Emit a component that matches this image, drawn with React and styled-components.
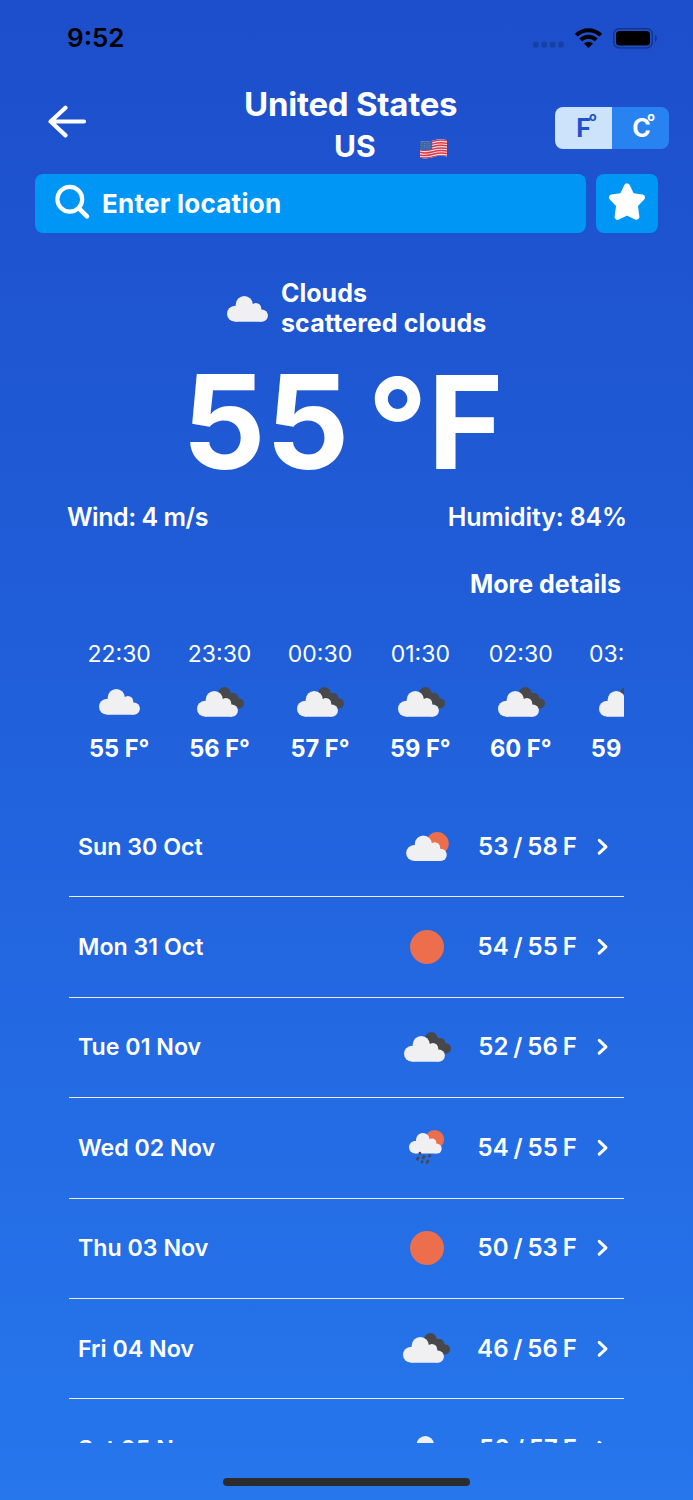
import React from "react";
import styled, { createGlobalStyle } from "styled-components";

const GlobalStyle = createGlobalStyle`
    * {
        box-sizing: border-box;
    }
    body {
        margin: 0;
        background: #2676ec;
    }
`;

const Screen = styled.div`
    display: flex;
    flex-direction: column;
    width: 693px;
    height: 1500px;
    overflow: hidden;
    background: linear-gradient(180deg, #1d4ecb 0%, #1f58d3 27%, #2161dc 50%, #2676ec 100%);
    color: #fff;
    font-family: Inter, "Liberation Sans", sans-serif;
`;

/* Every text is one line box, varied by size, weight and tracking */
const Text = styled.span`
    display: block;
    white-space: pre;
    font-size: ${(p) => p.$size}px;
    font-weight: ${(p) => p.$weight || 650};
    line-height: ${(p) => p.$line || 30}px;
    letter-spacing: ${(p) => p.$track || 0}px;
`;

const StatusBar = styled.div`
    display: flex;
    justify-content: space-between;
    align-items: center;
    height: 76px;
    flex-shrink: 0;
    padding: 0 36px 0 67px;
    color: #000;
`;

const StatusIcons = styled.div`
    display: flex;
    align-items: center;
`;

const WifiWrap = styled.div`
    display: flex;
    margin: 0 11px;
`;

const Header = styled.header`
    display: flex;
    height: 98px;
    flex-shrink: 0;
    padding: 0 24px 0 48px;
`;

const BackButton = styled.button`
    display: flex;
    width: 196px;
    padding: 29px 0 0;
    border: 0;
    background: none;
`;

const Place = styled.div`
    flex: 1;
    padding-top: 8px;
`;

const CountryRow = styled.div`
    display: flex;
    align-items: center;
    gap: 44px;
    padding: 1px 0 0 90px;
`;

const FlagWrap = styled.div`
    display: flex;
    padding-top: 4px;
`;

const UnitSwitch = styled.div`
    display: flex;
    width: 114px;
    height: 42px;
    margin-top: 31px;
    border-radius: 8px;
    overflow: hidden;
`;

const Unit = styled.button`
    display: flex;
    justify-content: center;
    flex: 1;
    padding: 6px 0 0 6px;
    border: 0;
    font-family: inherit;
    background: ${(p) => (p.$active ? "#cde3fb" : "#2883f1")};
    color: ${(p) => (p.$active ? "#1f50cc" : "#fff")};
`;

const UnitDegree = styled(Text)`
    margin-left: ${(p) => p.$shift}px;
`;

const SearchRow = styled.div`
    display: flex;
    gap: 10px;
    height: 59px;
    flex-shrink: 0;
    padding: 0 35px;
`;

const SearchBox = styled.div`
    display: flex;
    align-items: center;
    gap: 11px;
    flex: 1;
    padding-left: 20px;
    border-radius: 8px;
    background: #0096f6;
`;

const SearchIconWrap = styled.div`
    display: flex;
    margin-bottom: 4px;
`;

const FavoriteButton = styled.button`
    display: flex;
    justify-content: center;
    width: 62px;
    padding: 9px 0 0;
    border: 0;
    border-radius: 8px;
    background: #0096f6;
`;

const Condition = styled.div`
    display: flex;
    align-items: center;
    gap: 13px;
    height: 60px;
    flex-shrink: 0;
    margin-top: 45px;
    padding-left: 227px;

    svg {
        margin-top: 2px;
    }
`;

const Temperature = styled.div`
    display: flex;
    height: 120px;
    flex-shrink: 0;
    margin-top: 24px;
    padding-left: 182px;
`;

const Degree = styled(Text)`
    margin: 3px 0 0 18px;
`;

const Stats = styled.div`
    display: flex;
    justify-content: space-between;
    margin-top: 20px;
    padding: 0 66px 0 67px;
`;

const MoreLink = styled.div`
    display: flex;
    justify-content: flex-end;
    margin-top: 37px;
    padding-right: 72px;
`;

const Hourly = styled.div`
    display: flex;
    flex-shrink: 0;
    height: 158px;
    margin: 40px 69px 0;
    overflow: hidden;
`;

const Hour = styled.div`
    display: flex;
    flex-direction: column;
    align-items: center;
    flex: 0 0 100.4px;
`;

const HourIcon = styled.div`
    display: flex;
    justify-content: center;
    align-items: center;
    height: 65px;
    padding: 1px 0 0 ${(p) => (p.$wide ? 2 : 0)}px;
`;

const Daily = styled.div`
    height: 646px;
    flex-shrink: 0;
    margin: 0 69px;
    overflow: hidden;
`;

const Day = styled.div`
    display: flex;
    align-items: center;
    height: 100.4px;
    padding: 0 15px 0 9px;
    border-bottom: 1px solid #e9f0fc;
`;

const DayIcon = styled.div`
    display: flex;
    justify-content: center;
    width: 50px;
    margin: 0 25.5px 1px auto;
`;

const DayTemp = styled(Text)`
    margin-right: 20px;
    word-spacing: -1.5px;
`;

const HomeBar = styled.div`
    width: 247px;
    height: 8px;
    flex-shrink: 0;
    margin: 35px 0 0 223px;
    border-radius: 4px;
    background: #2c2c2e;
`;

const CloudShape = () => (
    <g fill="#f0f0f2">
        <circle cx="17.3" cy="8.6" r="8.6" />
        <circle cx="7.8" cy="17.8" r="7.8" />
        <circle cx="28.9" cy="12.2" r="5.3" />
        <circle cx="34.8" cy="19.6" r="6.1" />
        <path d="M6 10.4 L9 9.6 L24.6 7.8 L33 10.6 L34.4 13.8 L34.8 25.7 H7.8 Z" />
    </g>
);

const CloudIcon = () => (
    <svg width="41" height="26" viewBox="0 0 41 26">
        <CloudShape />
    </svg>
);

const BrokenCloudsIcon = () => (
    <svg width="47" height="30" viewBox="0 -4 47 30">
        <g fill="#48484a">
            <circle cx="27.3" cy="2.3" r="6.2" />
            <circle cx="36.4" cy="6.8" r="4.8" />
            <circle cx="42" cy="12.4" r="5" />
            <path d="M22 4 L31 -2 L34 2 L40 4.4 L42 8 L41 17.4 L34 16 Z" />
        </g>
        <CloudShape />
    </svg>
);

const SunCloudIcon = () => (
    <svg width="43" height="29" viewBox="0 -3.4 43 29.2">
        <circle cx="31.4" cy="8.2" r="11.5" fill="#ec6e4c" />
        <CloudShape />
    </svg>
);

const SunIcon = () => (
    <svg width="34" height="34" viewBox="0 0 34 34">
        <circle cx="17" cy="17" r="17" fill="#ec6e4c" />
    </svg>
);

const RainIcon = () => (
    <svg width="36" height="34" viewBox="0 0 36 34">
        <circle cx="25.7" cy="9.4" r="9.4" fill="#ec6e4c" />
        <g transform="translate(0 3) scale(0.8)">
            <CloudShape />
        </g>
        <g stroke="#48484a" strokeWidth="2.6" strokeLinecap="round">
            <path d="M10.9 23v.4M9.1 27.8l-.8 1.6M15.1 26.4l-.8 1.6M20.9 25.4l-.4.9M13.2 31.6l-.3.6M18.9 31l-.8 1.5" />
        </g>
    </svg>
);

const icons = {
    cloud: <CloudIcon />,
    broken: <BrokenCloudsIcon />,
    sunCloud: <SunCloudIcon />,
    sun: <SunIcon />,
    rain: <RainIcon />,
};

const SignalDots = () => (
    <svg width="31" height="20" viewBox="0 0 31 20">
        {[0, 8.4, 16.8, 25.2].map((x) => (
            <rect key={x} x={x} y="13.8" width="5.6" height="5.8" rx="1.8" fill="#173fa4" />
        ))}
    </svg>
);

const WifiIcon = () => (
    <svg width="27" height="20" viewBox="0 0 27 20">
        <g fill="none" stroke="#000" strokeWidth="4">
            <path d="M1.3 7.2 A17.3 17.3 0 0 1 25.7 7.2" />
            <path d="M5.7 11.9 A11 11 0 0 1 21.3 11.9" />
        </g>
        <path d="M13.5 20 L9 15.6 A6.4 6.4 0 0 1 18 15.6 Z" />
    </svg>
);

const BatteryIcon = () => (
    <svg width="44" height="21" viewBox="0 0 44 21">
        <rect x="0.7" y="0.7" width="38.6" height="19.2" rx="5.6" fill="none" stroke="#153585" strokeWidth="1.4" />
        <rect x="3" y="3" width="34" height="14.6" rx="3.6" />
        <path d="M42 7 c2.4 1.2 2.4 5.6 0 6.8z" fill="#153585" />
    </svg>
);

const BackArrow = () => (
    <svg width="39" height="34" viewBox="0 0 39 34" fill="none" stroke="#fff" strokeWidth="4.2" strokeLinecap="round" strokeLinejoin="round">
        <path d="M17.5 2.8 L2.6 16.5 L17.5 30.4 M2.6 16.5 H36" />
    </svg>
);

const SearchIcon = () => (
    <svg width="36" height="36" viewBox="0 0 36 36" fill="none" stroke="#fff" strokeWidth="4.2" strokeLinecap="round">
        <circle cx="14.8" cy="15.2" r="12.4" />
        <path d="M24.2 24.6 L32 32.4" strokeWidth="4.6" />
    </svg>
);

const StarIcon = () => (
    <svg width="38" height="38" viewBox="0 0 38 38">
        <path
            d="M19 3.4 L23.6 13 L34 14.4 L26.8 22 L28.4 33.8 L19 29.4 L9.6 33.8 L11.2 22 L4 14.4 L14.4 13 Z"
            fill="#fff"
            stroke="#fff"
            strokeWidth="6"
            strokeLinejoin="round"
        />
    </svg>
);

const FlagIcon = () => (
    <svg width="27" height="20" viewBox="0 0 27 20">
        <clipPath id="flag">
            <path d="M0 2 Q6 3.6 13 1.4 Q20 -.8 27 .9 V17.4 Q20 16 13.5 18 Q7 20.4 0 18.8 Z" />
        </clipPath>
        <g clipPath="url(#flag)">
            <rect width="27" height="20" fill="#f0e4e9" />
            <g fill="none" stroke="#d93a49" strokeWidth="1.5">
                {[2.3, 4.9, 7.5, 10.1, 12.7, 15.3, 17.9].map((y) => (
                    <path key={y} d={`M0 ${y + 0.6} Q6 ${y + 2} 13 ${y} T27 ${y - 0.7}`} />
                ))}
            </g>
            <path d="M0 1.5 Q6 3.6 12.2 1.4 V10.2 Q6 12 0 10.8 Z" fill="#3c65a8" />
            <g fill="#8fa9d4">
                {[2, 4.6, 7.2, 9.8].map((x) => (
                    <g key={x}>
                        <circle cx={x} cy="4.4" r=".45" />
                        <circle cx={x} cy="6.5" r=".45" />
                        <circle cx={x} cy="8.6" r=".45" />
                    </g>
                ))}
            </g>
        </g>
    </svg>
);

const Chevron = () => (
    <svg width="12" height="18" viewBox="0 0 12 18" fill="none" stroke="#fff" strokeWidth="3" strokeLinecap="round" strokeLinejoin="round">
        <path d="M2.2 2.4 L9 8.8 L2.2 15.2" />
    </svg>
);

const hours = [
    { time: "22:30", icon: "cloud", temp: "55 F°" },
    { time: "23:30", icon: "broken", temp: "56 F°" },
    { time: "00:30", icon: "broken", temp: "57 F°" },
    { time: "01:30", icon: "broken", temp: "59 F°" },
    { time: "02:30", icon: "broken", temp: "60 F°" },
    { time: "03:30", icon: "broken", temp: "59 F°" },
];

const days = [
    { date: "Sun 30 Oct", icon: "sunCloud", temp: "53 / 58 F" },
    { date: "Mon 31 Oct", icon: "sun", temp: "54 / 55 F" },
    { date: "Tue 01 Nov", icon: "broken", temp: "52 / 56 F" },
    { date: "Wed 02 Nov", icon: "rain", temp: "54 / 55 F" },
    { date: "Thu 03 Nov", icon: "sun", temp: "50 / 53 F" },
    { date: "Fri 04 Nov", icon: "broken", temp: "46 / 56 F" },
    { date: "Sat 05 Nov", icon: "cloud", temp: "50 / 57 F" },
];

const Weather = () => {
    return (
        <Screen>
            <StatusBar>
                <Text $size={26} $weight={600} $line={32}>9:52</Text>
                <StatusIcons>
                    <SignalDots />
                    <WifiWrap>
                        <WifiIcon />
                    </WifiWrap>
                    <BatteryIcon />
                </StatusIcons>
            </StatusBar>

            <Header>
                <BackButton>
                    <BackArrow />
                </BackButton>
                <Place>
                    <Text $size={33} $line={41} $track={-0.25}>United States</Text>
                    <CountryRow>
                        <Text $size={30} $line={41}>US</Text>
                        <FlagWrap>
                            <FlagIcon />
                        </FlagWrap>
                    </CountryRow>
                </Place>
                <UnitSwitch>
                    <Unit $active>
                        <Text $size={25}>F</Text>
                        <UnitDegree $size={12.5} $line={8} $weight={700} $shift={-2}>o</UnitDegree>
                    </Unit>
                    <Unit>
                        <Text $size={25}>C</Text>
                        <UnitDegree $size={12.5} $line={8} $weight={700} $shift={-3.5}>o</UnitDegree>
                    </Unit>
                </UnitSwitch>
            </Header>

            <SearchRow>
                <SearchBox>
                    <SearchIconWrap>
                        <SearchIcon />
                    </SearchIconWrap>
                    <Text $size={26} $track={0.25}>Enter location</Text>
                </SearchBox>
                <FavoriteButton>
                    <StarIcon />
                </FavoriteButton>
            </SearchRow>

            <Condition>
                <CloudIcon />
                <div>
                    <Text $size={25}>Clouds</Text>
                    <Text $size={25} $track={0.1}>scattered clouds</Text>
                </div>
            </Condition>

            <Temperature>
                <Text $size={131} $weight={720} $line={120}>55</Text>
                <Degree $size={131} $weight={750} $line={120}>°</Degree>
                <Text $size={129} $weight={700} $line={121}>F</Text>
            </Temperature>

            <Stats>
                <Text $size={25} $weight={570} $track={-0.45}>Wind: 4 m/s</Text>
                <Text $size={25} $weight={570} $track={-0.15}>Humidity: 84%</Text>
            </Stats>

            <MoreLink>
                <Text $size={25}>More details</Text>
            </MoreLink>

            <Hourly>
                {hours.map((h) => (
                    <Hour key={h.time}>
                        <Text $size={23} $weight={400}>{h.time}</Text>
                        <HourIcon $wide={h.icon === "broken"}>{icons[h.icon]}</HourIcon>
                        <Text $size={23.6} $weight={700}>{h.temp}</Text>
                    </Hour>
                ))}
            </Hourly>

            <Daily>
                {days.map((d) => (
                    <Day key={d.date}>
                        <Text $size={23.2} $weight={570}>{d.date}</Text>
                        <DayIcon>{icons[d.icon]}</DayIcon>
                        <DayTemp $size={24} $weight={570} $track={0.15}>{d.temp}</DayTemp>
                        <Chevron />
                    </Day>
                ))}
            </Daily>

            <HomeBar />
        </Screen>
    );
};

const App = () => (
    <>
        <GlobalStyle />
        <Weather />
    </>
);

export default App;
